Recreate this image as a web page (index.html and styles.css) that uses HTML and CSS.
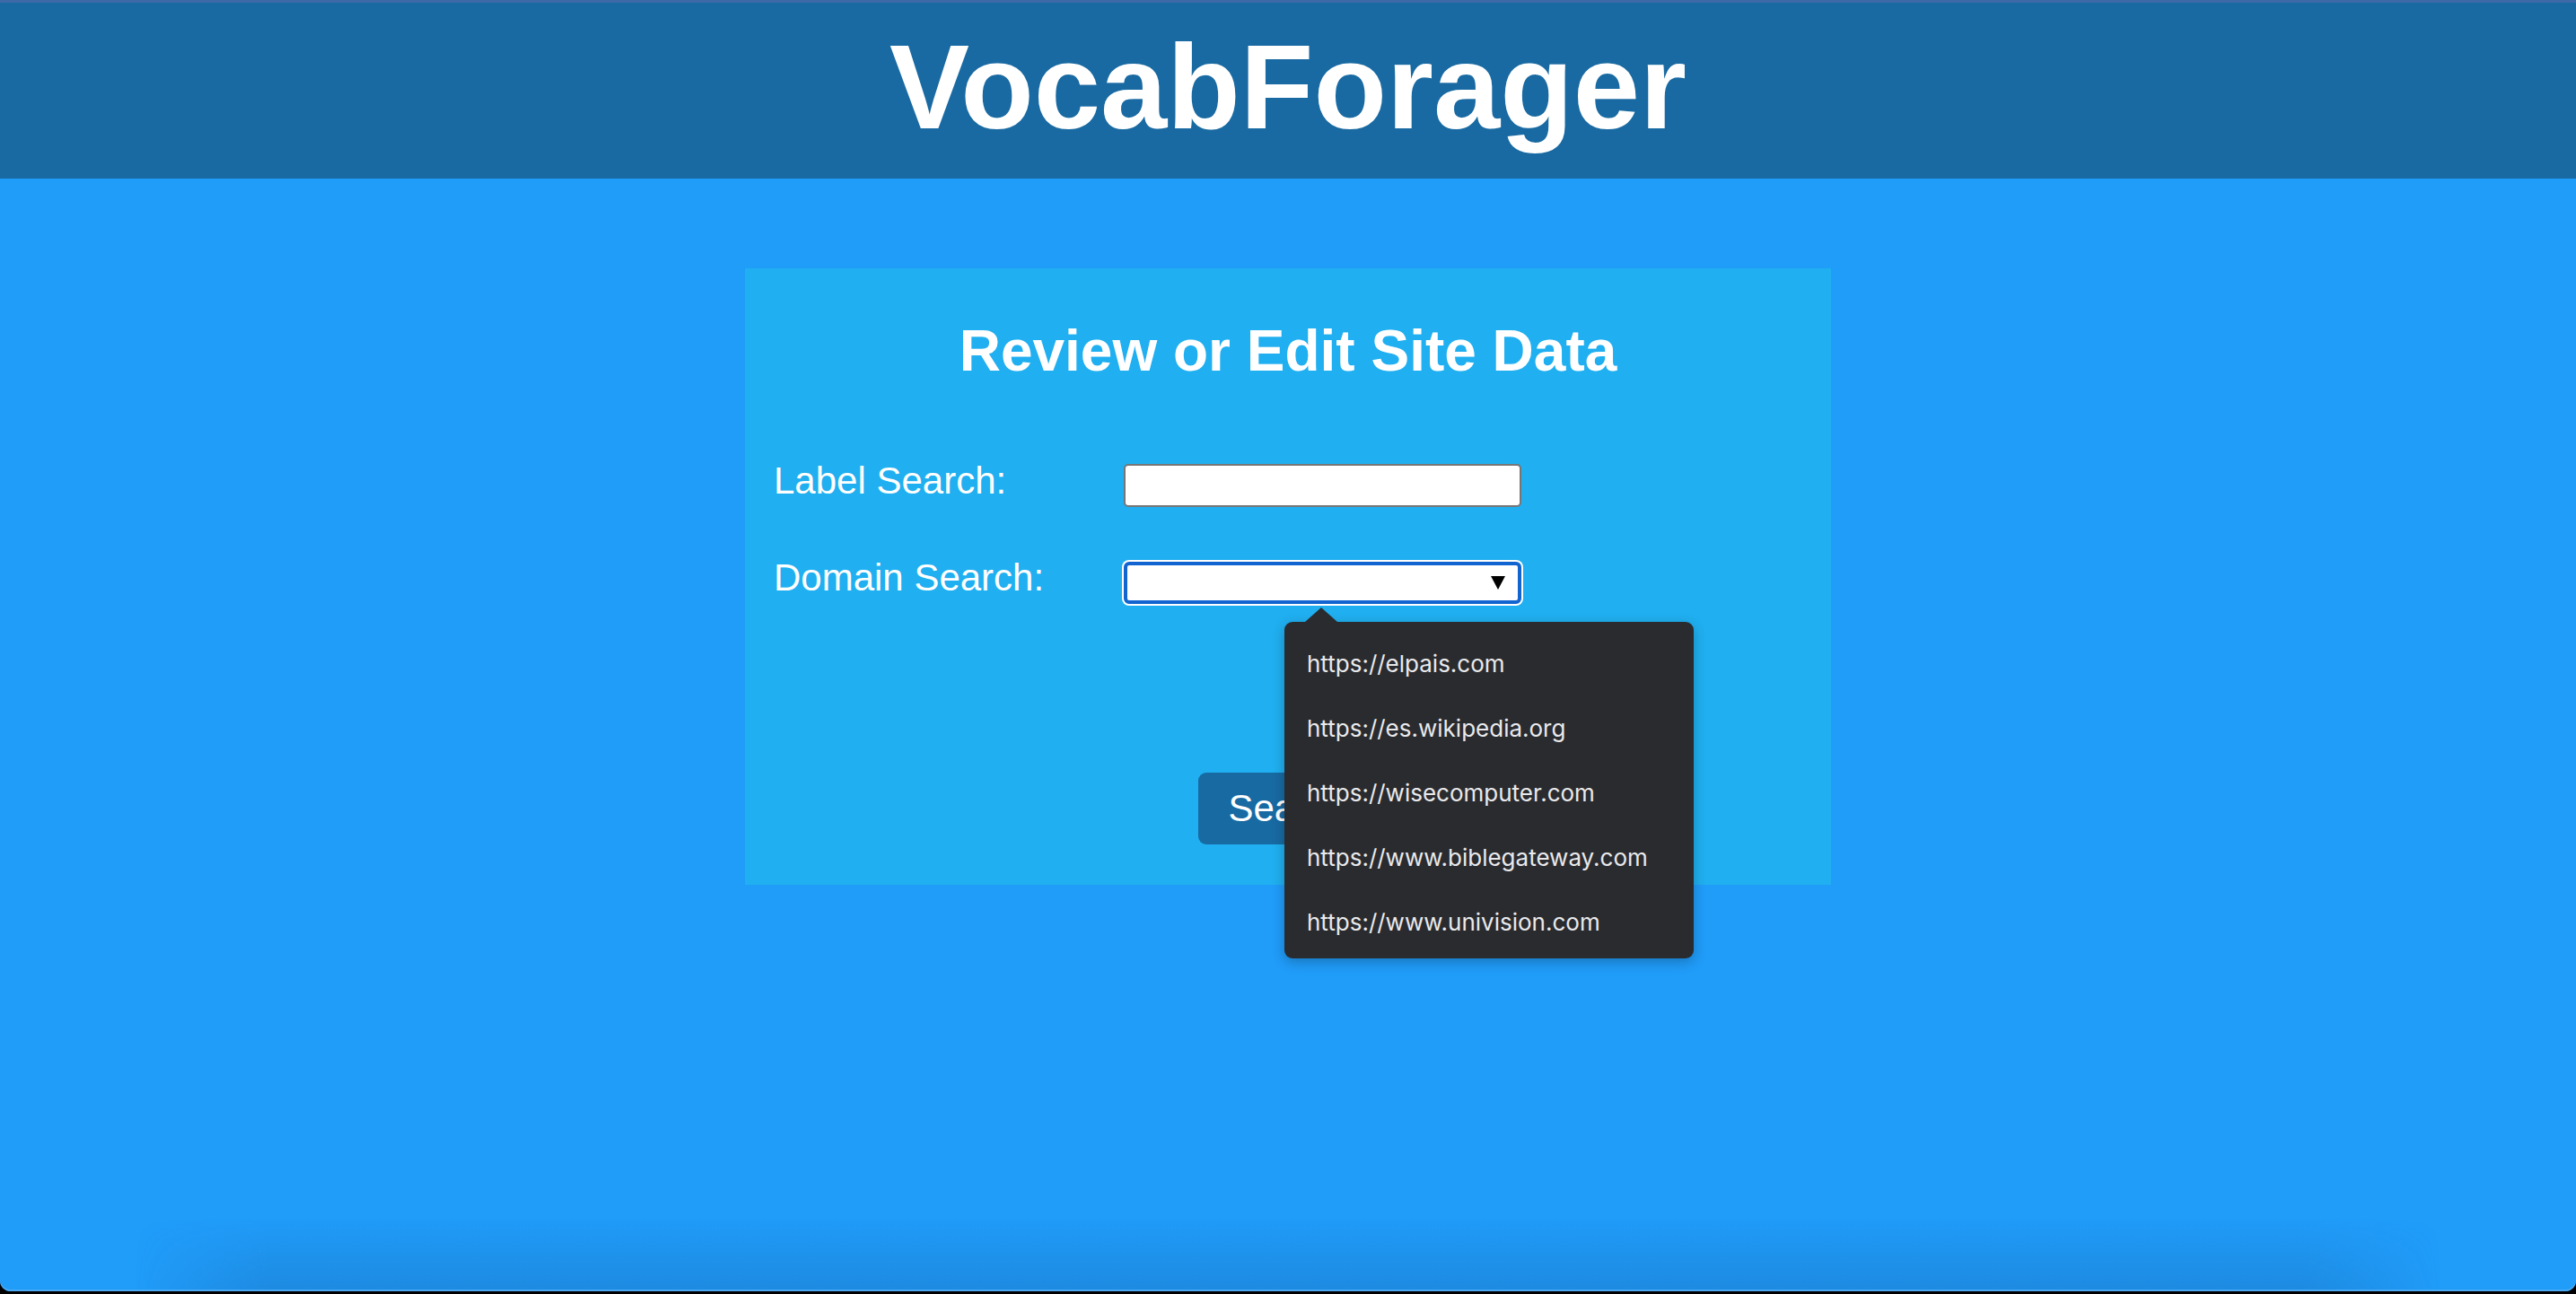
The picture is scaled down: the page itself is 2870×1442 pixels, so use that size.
FILE: index.html
```html
<!DOCTYPE html>
<html lang="en">
<head>
<meta charset="utf-8">
<title>VocabForager</title>
<link rel="stylesheet" href="styles.css">
</head>
<body>
<div class="page">
  <header class="topbar">
    <h1 class="brand">VocabForager</h1>
  </header>
  <main class="main">
    <section class="card">
      <h2 class="card-title">Review or Edit Site Data</h2>
      <div class="form">
        <label class="field-label">Label Search:</label>
        <div class="text-input"></div>
        <label class="field-label">Domain Search:</label>
        <div class="select-wrap">
          <div class="select">
            <svg class="select-arrow" width="16" height="15" viewBox="0 0 16 15"><path d="M0 0 H16 L8 15 Z" fill="#000"/></svg>
          </div>
          <div class="popup">
            <div class="popup-item">https://elpais.com</div>
            <div class="popup-item">https://es.wikipedia.org</div>
            <div class="popup-item">https://wisecomputer.com</div>
            <div class="popup-item">https://www.biblegateway.com</div>
            <div class="popup-item">https://www.univision.com</div>
          </div>
        </div>
      </div>
      <div class="actions">
        <button class="btn">Search</button>
      </div>
    </section>
  </main>
</div>
</body>
</html>
```
FILE: styles.css
```css
html, body {
  margin: 0;
  padding: 0;
  background: #000;
}
body {
  font-family: "Liberation Sans", Arial, sans-serif;
  color: #fff;
}
.page {
  position: relative;
  height: 1439px;
  background: #209cf9;
  border-radius: 0 0 12px 12px;
  overflow: hidden;
  box-shadow: inset 0 -2px 0 #4aa9f2;
}
.page::after {
  content: "";
  position: absolute;
  left: 0;
  right: 0;
  bottom: 2px;
  height: 80px;
  background: linear-gradient(to bottom, rgba(20, 60, 120, 0) 0%, rgba(20, 70, 130, 0.2) 100%);
  -webkit-mask-image: linear-gradient(to right, transparent 150px, #000 300px, #000 calc(100% - 300px), transparent calc(100% - 150px));
  mask-image: linear-gradient(to right, transparent 150px, #000 300px, #000 calc(100% - 300px), transparent calc(100% - 150px));
  pointer-events: none;
}
.topbar {
  background: #196aa2;
  border-top: 3px solid #3d6aa6;
  padding: 27px 0 36px;
  text-align: center;
}
.brand {
  margin: 0;
  font-size: 133.5px;
  line-height: 133px;
  font-weight: 700;
  color: #fff;
}
.main {
  display: flex;
  justify-content: center;
  padding-top: 100px;
}
.card {
  width: 1210px;
  box-sizing: border-box;
  background: #20aff0;
  padding: 60px 32px 45px;
}
.card-title {
  margin: 0;
  text-align: center;
  font-size: 64px;
  line-height: 64px;
  font-weight: 700;
  color: #fff;
}
.form {
  margin-top: 91px;
  display: grid;
  grid-template-columns: 390px 443px;
  row-gap: 57px;
  align-items: start;
}
.field-label {
  font-size: 42px;
  line-height: 44px;
  color: #fff;
}
.text-input {
  margin-top: 3px;
  height: 48px;
  box-sizing: border-box;
  border: 2px solid #767676;
  border-radius: 5px;
  background: #fff;
}
.select-wrap {
  position: relative;
  margin-top: 4px;
}
.select {
  height: 47px;
  box-sizing: border-box;
  border: 4px solid #1265d0;
  border-radius: 6px;
  background: #fff;
  box-shadow: 0 0 0 2px #fff;
  display: flex;
  align-items: center;
  justify-content: flex-end;
  padding-right: 14px;
}
.select-arrow {
  display: block;
}
.popup {
  position: absolute;
  left: 179px;
  top: 67px;
  width: 456px;
  box-sizing: border-box;
  background: #2a2b2f;
  border-radius: 9px;
  padding: 11px 0 4px;
  box-shadow: 0 4px 14px rgba(0, 0, 0, 0.25);
  z-index: 5;
}
.popup::before {
  content: "";
  position: absolute;
  left: 23px;
  top: -16px;
  border-left: 18px solid transparent;
  border-right: 18px solid transparent;
  border-bottom: 16px solid #2a2b2f;
}
.popup-item {
  height: 72px;
  line-height: 72px;
  padding-left: 25px;
  font-family: "Inter", "Noto Sans", sans-serif;
  font-size: 26px;
  color: #e9e9eb;
  white-space: nowrap;
}
.actions {
  display: flex;
  justify-content: center;
  margin-top: 188px;
}
.btn {
  width: 200px;
  height: 80px;
  border: none;
  border-radius: 9px;
  background: #186aa3;
  color: #fff;
  font-family: "Liberation Sans", Arial, sans-serif;
  font-size: 42px;
  line-height: 80px;
  padding: 0;
}
```
